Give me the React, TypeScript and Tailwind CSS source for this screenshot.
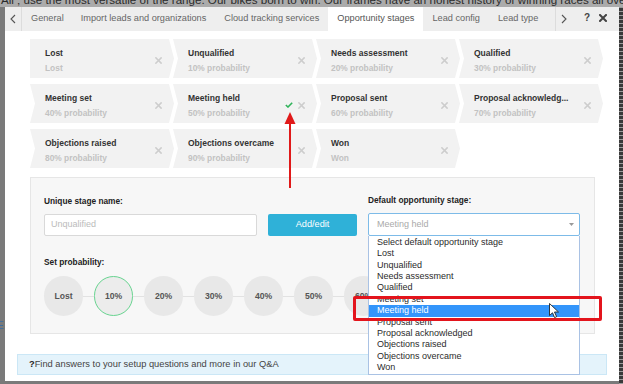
import React from "react";

type Stage = { title: string; sub: string; check?: boolean };

const rows: Stage[][] = [
  [
    { title: "Lost", sub: "Lost" },
    { title: "Unqualified", sub: "10% probability" },
    { title: "Needs assessment", sub: "20% probability" },
    { title: "Qualified", sub: "30% probability" },
  ],
  [
    { title: "Meeting set", sub: "40% probability" },
    { title: "Meeting held", sub: "50% probability", check: true },
    { title: "Proposal sent", sub: "60% probability" },
    { title: "Proposal acknowledg...", sub: "70% probability" },
  ],
  [
    { title: "Objections raised", sub: "80% probability" },
    { title: "Objections overcame", sub: "90% probability" },
    { title: "Won", sub: "Won" },
  ],
];

const options = [
  "Select default opportunity stage",
  "Lost",
  "Unqualified",
  "Needs assessment",
  "Qualified",
  "Meeting set",
  "Meeting held",
  "Proposal sent",
  "Proposal acknowledged",
  "Objections raised",
  "Objections overcame",
  "Won",
];

const probs = ["Lost", "10%", "20%", "30%", "40%", "50%", "60%", "70%", "80%", "90%"];

function XIcon({ color = "#cdcdcd", size = 7, w = 1.8 }: { color?: string; size?: number; w?: number }) {
  return (
    <svg width={size} height={size} viewBox="0 0 8 8">
      <path d="M1 1 L7 7 M7 1 L1 7" stroke={color} strokeWidth={w} strokeLinecap="square" />
    </svg>
  );
}

function Card({ s, first }: { s: Stage; first: boolean }) {
  return (
    <div
      className={
        "relative w-[144px] h-[39px] bg-[#f2f2f2] flex items-center " +
        (first
          ? "[clip-path:polygon(0_0,calc(100%-5px)_0,100%_50%,calc(100%-5px)_100%,0_100%)]"
          : "[clip-path:polygon(0_0,calc(100%-5px)_0,100%_50%,calc(100%-5px)_100%,0_100%,5px_50%)]")
      }
    >
      <div className="pl-[15px] mt-[4px] flex flex-col w-[112px]">
        <span className="text-[8.5px] leading-[12px] font-bold text-[#333] whitespace-nowrap">{s.title}</span>
        <span className="text-[8.4px] leading-[12px] mt-[3px] font-bold text-[#c2c2c2] whitespace-nowrap">{s.sub}</span>
      </div>
      <div className="flex items-center gap-[5px] ml-auto mr-[12px] mt-[3px]">
        {s.check && (
          <svg width="8" height="6" viewBox="0 0 8 6">
            <path d="M0.8 3 L3 5 L7.2 0.8" stroke="#2fb35a" strokeWidth="1.6" fill="none" />
          </svg>
        )}
        <XIcon />
      </div>
    </div>
  );
}

export default function App() {
  return (
    <div className="relative w-[623px] h-[384px] overflow-hidden bg-[#7a7a7a] font-['Liberation_Sans',Arial,sans-serif]">
      {/* page behind overlay */}
      <div className="h-[7px] bg-[#ababab] overflow-hidden">
        <div className="-mt-[7px] text-[11.6px] leading-[13px] text-[#2a2a2a] whitespace-nowrap pl-[1px]">
          All ; use the most versatile of the range. Our bikes born to win. Our frames have an honest history of winning races all over the world
        </div>
      </div>
      <div className="flex">
        <div className="w-[5px] h-[377px] relative">
          <span className="absolute left-[-3px] top-[311px] text-[10px] text-[#3c6ea8]">E</span>
        </div>
        {/* modal */}
        <div className="w-[614px] h-[374px] bg-white flex flex-col">
          {/* tab bar */}
          <div className="h-[24px] bg-[#eeeeee] flex items-stretch text-[9.2px] text-[#666]">
            <div className="w-[17px] border-r border-[#dcdcdc] flex items-center justify-center">
              <svg width="6" height="10" viewBox="0 0 6 10">
                <path d="M5 1 L1 5 L5 9" stroke="#555" strokeWidth="1.1" fill="none" />
              </svg>
            </div>
            <div className="px-[8px] ml-[1px] flex items-center">General</div>
            <div className="px-[9px] flex items-center">Import leads and organizations</div>
            <div className="px-[9px] flex items-center">Cloud tracking services</div>
            <div className="px-[9px] flex items-center bg-white text-[#555]">Opportunity stages</div>
            <div className="px-[9px] flex items-center">Lead config</div>
            <div className="px-[9px] flex items-center">Lead type</div>
            <div className="w-[17px] ml-auto mr-[47px] border-l border-[#dcdcdc] flex items-center justify-center">
              <svg width="6" height="10" viewBox="0 0 6 10">
                <path d="M1 1 L5 5 L1 9" stroke="#555" strokeWidth="1.1" fill="none" />
              </svg>
            </div>
          </div>

          {/* stages */}
          <div className="mt-[8px] ml-[25px] flex flex-col gap-[6px]">
            {rows.map((r, ri) => (
              <div key={ri} className="grid grid-cols-[repeat(4,143px)]">
                {r.map((s, i) => (
                  <Card key={i} s={s} first={ri === 0 && i === 0} />
                ))}
              </div>
            ))}
          </div>

          {/* form panel */}
          <div className="mt-[9px] ml-[25px] w-[565px] bg-[#f7f7f7] border border-[#e6e6e6] pl-[13px] pt-[16px] pb-[17px] relative">
            <div className="flex items-end">
              <div className="w-[213px] flex flex-col">
                <div className="text-[8.3px] leading-[12px] font-bold text-[#222]">Unique stage name:</div>
                <div className="mt-[7px] h-[22px] bg-white border border-[#d9d9d9] rounded-[2px] flex items-center pl-[6px] text-[9px] text-[#bbb]">
                  Unqualified
                </div>
              </div>
              <div className="ml-[11px] w-[89px] h-[22px] bg-[#2fb1d8] rounded-[2px] flex items-center justify-center text-white text-[9.2px]">
                Add/edit
              </div>
              <div className="ml-[11px] w-[212px] flex flex-col">
                <div className="text-[8.3px] leading-[12px] font-bold text-[#222]">Default opportunity stage:</div>
                <div className="relative mt-[7px] z-10">
                  <div className="h-[23px] bg-white border border-[#7dbbe8] rounded-[2px] flex items-center pl-[8px] text-[9px] text-[#aaa]">
                    Meeting held
                    <svg className="ml-auto mr-[5px]" width="5" height="3" viewBox="0 0 5 3">
                      <path d="M0 0 L5 0 L2.5 3 Z" fill="#999" />
                    </svg>
                  </div>
                  <div className="absolute left-0 top-full w-[212px] bg-white border border-[#a9c2e4] border-t-0 pt-[1px] pb-[1px] text-[9px] leading-[11.36px] text-[#2b2b2b]">
                    {options.map((o) => (
                      <div
                        key={o}
                        className={"pl-[8px] whitespace-nowrap " + (o === "Meeting held" ? "bg-[#3395fb] text-white" : "")}
                      >
                        {o}
                      </div>
                    ))}
                  </div>
                </div>
              </div>
            </div>

            <div className="mt-[20px] text-[8.3px] leading-[12px] font-bold text-[#222]">Set probability:</div>
            <div className="mt-[8px] relative flex gap-[11px]">
              <div className="absolute left-[20px] right-[20px] top-[20px] h-px bg-[#e2e2e2]" />
              {probs.map((p) => (
                <div
                  key={p}
                  className={
                    "relative w-[39px] h-[40px] rounded-full flex items-center justify-center text-[8.6px] font-bold text-[#555] shrink-0 " +
                    (p === "10%" ? "bg-[#ececec] border-[1.5px] border-[#68d490]" : "bg-[#e8e8e8]")
                  }
                >
                  {p}
                </div>
              ))}
            </div>
          </div>

          {/* footer */}
          <div className="mt-[20px] ml-[12px] w-[590px] h-[21px] bg-[#e4f3fb] border border-[#cbe7f6] flex items-center pl-[11px] text-[9.3px] text-[#444]">
            <span className="font-bold text-[#222]">?</span>
            <span>Find answers to your setup questions and more in our Q&amp;A</span>
          </div>
        </div>
        <div className="w-[4px] h-[377px] bg-[repeating-linear-gradient(180deg,#9a9a9a_0_1px,#3a3a3a_1px_4px)]" />
      </div>

      {/* help & close */}
      <div className="absolute left-[584px] top-[13px] flex items-center gap-[9px]">
        <span className="text-[10px] leading-[10px] font-bold text-[#444]">?</span>
        <XIcon color="#444" size={8} w={2} />
      </div>

      {/* red arrow annotation */}
      <svg className="absolute z-20 left-[283px] top-[111px]" width="14" height="79" viewBox="0 0 14 79">
        <path d="M7 10 L7 77" stroke="#e01919" strokeWidth="2" />
        <path d="M1.5 13 L7 1 L12.5 13 Z" fill="#e01919" />
      </svg>

      {/* red box annotation */}
      <div className="absolute z-20 left-[353px] top-[296px] w-[249px] h-[25px] border-[3px] border-[#e3141c] rounded-[2px]" />

      {/* mouse cursor */}
      <svg className="absolute z-20 left-[549px] top-[303px]" width="11" height="16" viewBox="0 0 11 16">
        <path d="M0.5 0.5 L0.5 12.5 L3.5 9.8 L5.6 14.6 L7.6 13.7 L5.5 9 L9.5 9 Z" fill="#fff" stroke="#222" strokeWidth="0.9" />
      </svg>
    </div>
  );
}
